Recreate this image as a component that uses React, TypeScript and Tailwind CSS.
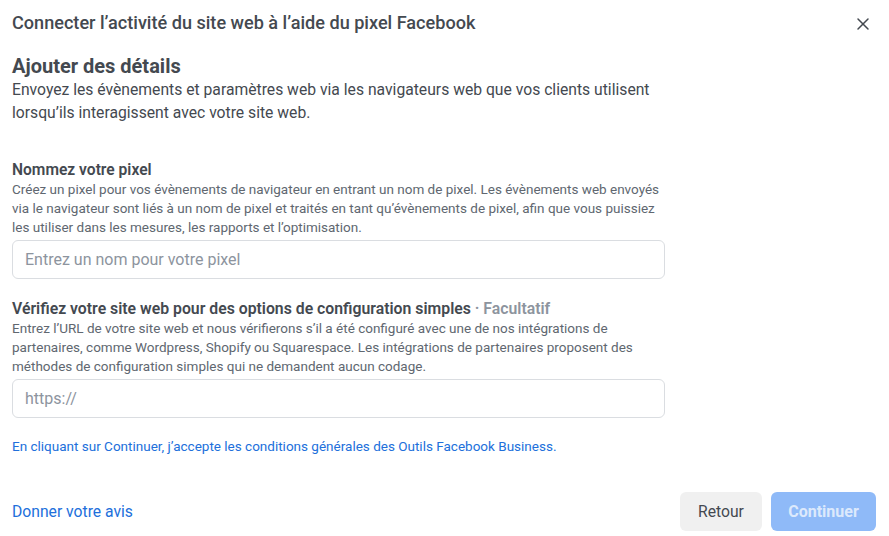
import { X } from "lucide-react";

const font = { fontFamily: "Roboto, 'Liberation Sans', sans-serif" };

export default function App() {
  return (
    <div className="flex h-[536px] w-[889px] flex-col bg-white text-[#444950]" style={font}>
      {/* Header */}
      <div className="flex h-[46px] items-center justify-between pl-3 pr-[16px]">
        <h1 className="text-[18.1px] font-medium text-[#444950]">
          Connecter l’activité du site web à l’aide du pixel Facebook
        </h1>
        <X size={20} strokeWidth={1.8} className="mt-[1px] text-[#444950]" />
      </div>

      {/* Body */}
      <div className="flex flex-1 flex-col px-3">
        <h2 className="mt-[8px] text-[20px] font-bold leading-[24px] text-[#444950]">Ajouter des détails</h2>
        <p className="w-[660px] text-[15.7px] leading-[23px] text-[#444950]">
          Envoyez les évènements et paramètres web via les navigateurs web que vos clients utilisent
          <br />
          lorsqu’ils interagissent avec votre site web.
        </p>

        <div className="mt-[36px] flex flex-col">
          <div className="text-[15.6px] font-semibold leading-[20px] text-[#444950]">Nommez votre pixel</div>
          <p className="whitespace-nowrap text-[13.5px] leading-[19px] text-[#606770]">
            Créez un pixel pour vos évènements de navigateur en entrant un nom de pixel. Les évènements web envoyés
            <br />
            via le navigateur sont liés à un nom de pixel et traités en tant qu’évènements de pixel, afin que vous puissiez
            <br />
            les utiliser dans les mesures, les rapports et l’optimisation.
          </p>
          <input
            className="mt-[3px] h-[39px] w-[653px] rounded-md border border-[#dadde1] px-3 text-[16px] text-[#444950] outline-none placeholder:text-[#8d949e]"
            placeholder="Entrez un nom pour votre pixel"
          />
        </div>

        <div className="mt-[20px] flex flex-col">
          <div className="whitespace-nowrap text-[15.8px] font-semibold leading-[20px] text-[#444950]">
            Vérifiez votre site web pour des options de configuration simples{" "}
            <span className="text-[#8d949e]">· Facultatif</span>
          </div>
          <p className="whitespace-nowrap text-[13.5px] leading-[19px] text-[#606770]">
            Entrez l’URL de votre site web et nous vérifierons s’il a été configuré avec une de nos intégrations de
            <br />
            partenaires, comme Wordpress, Shopify ou Squarespace. Les intégrations de partenaires proposent des
            <br />
            méthodes de configuration simples qui ne demandent aucun codage.
          </p>
          <input
            className="mt-[3px] h-[39px] w-[653px] rounded-md border border-[#dadde1] px-3 text-[16px] text-[#444950] outline-none placeholder:text-[#8d949e]"
            placeholder="https://"
          />
        </div>

        <a className="mt-[19px] text-[13.5px] leading-[19px] text-[#216fdb]">
          En cliquant sur Continuer, j’accepte les conditions générales des Outils Facebook Business.
        </a>
      </div>

      {/* Footer */}
      <div className="flex items-center justify-between pb-[5px] pl-3 pr-[13px]">
        <a className="text-[15.7px] text-[#216fdb]">Donner votre avis</a>
        <div className="flex gap-[9px]">
          <button className="h-[39px] w-[82px] rounded-md bg-[#f0f0f0] text-[15.7px] text-[#444950]">Retour</button>
          <button className="h-[39px] w-[105px] rounded-md bg-[#8fbaf8] text-[16px] font-bold text-[#dce9fc]">
            Continuer
          </button>
        </div>
      </div>
    </div>
  );
}
